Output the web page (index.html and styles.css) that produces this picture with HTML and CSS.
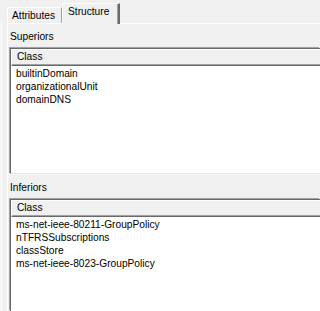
FILE: index.html
```html
<!DOCTYPE html>
<html>
<head>
<meta charset="utf-8">
<link rel="stylesheet" href="styles.css">
</head>
<body>
<div class="frame">
  <div class="edge"></div>
  <div class="tabctl">
    <div class="tabs">
      <div class="tab">Attributes</div>
      <div class="tab active">Structure</div>
    </div>
    <div class="page">
      <div class="label first">Superiors</div>
      <div class="list sup">
        <div class="header"><span class="col">Class</span></div>
        <div class="rows">
          <div class="row">builtinDomain</div>
          <div class="row">organizationalUnit</div>
          <div class="row">domainDNS</div>
        </div>
      </div>
      <div class="label">Inferiors</div>
      <div class="list inf">
        <div class="header"><span class="col">Class</span></div>
        <div class="rows">
          <div class="row">ms-net-ieee-80211-GroupPolicy</div>
          <div class="row">nTFRSSubscriptions</div>
          <div class="row">classStore</div>
          <div class="row">ms-net-ieee-8023-GroupPolicy</div>
        </div>
      </div>
    </div>
  </div>
</div>
</body>
</html>
```
FILE: styles.css
```css
html, body {
  margin: 0;
  padding: 0;
  background: #f0f0f0;
  font-family: "Liberation Sans", Arial, sans-serif;
  font-size: 10.2px;
  color: #000;
  overflow: hidden;
  height: 311px;
}
.frame {
  display: flex;
  height: 311px;
  overflow: hidden;
}
.edge {
  width: 1px;
  margin-left: 1px;
  margin-top: 21px;
  background: #ffffff;
  flex: none;
}
.tabctl {
  margin-left: 5px;
  flex: 1;
  min-width: 0;
  display: flex;
  flex-direction: column;
}
.tabs {
  display: flex;
  align-items: flex-end;
  height: 23px;
  padding-top: 3px;
  box-sizing: border-box;
  position: relative;
  z-index: 1;
  flex: none;
}
.tab {
  box-sizing: border-box;
  height: 16px;
  width: 55px;
  border-left: 1px solid #ffffff;
  border-top: 1px solid #ffffff;
  border-right: 1px solid #a0a0a0;
  border-top-left-radius: 2px;
  padding-left: 4px;
  line-height: 15px;
  background: #f0f0f0;
}
.tab.active {
  height: 21px;
  width: 58px;
  margin-bottom: -1px;
  padding-left: 5px;
  line-height: 16px;
  border-right: 2px solid #696969;
  box-shadow: inset -1px 0 0 #a0a0a0;
  border-top-right-radius: 1px;
}
.page {
  flex: 1;
  min-height: 0;
  display: flex;
  flex-direction: column;
  border-top: 1px solid #ffffff;
  border-left: 1px solid #ffffff;
  padding-left: 1px;
}
.label {
  padding-left: 1px;
  line-height: 13px;
  height: 13px;
  margin-top: 6px;
  margin-bottom: 4px;
  flex: none;
}
.label.first {
  margin-top: 6px;
  margin-bottom: 4px;
}
.list {
  background: #ffffff;
  border-top: 1px solid #696969;
  border-left: 1px solid #696969;
  box-shadow: -1px -1px 0 #a0a0a0;
  margin-left: 1px;
  margin-top: 1px;
  overflow: hidden;
}
.list.sup {
  height: 124px;
  flex: none;
  border-bottom: 1px solid #e3e3e3;
  box-shadow: -1px -1px 0 #a0a0a0, 0 1px 0 #ffffff;
  margin-bottom: 1px;
}
.list.inf {
  flex: 1;
  min-height: 0;
}
.header {
  box-sizing: border-box;
  height: 17px;
  background: #f0f0f0;
  border-top: 1px solid #ffffff;
  border-left: 1px solid #ffffff;
  border-bottom: 1px solid #696969;
  box-shadow: inset 0 -1px 0 #a0a0a0;
  padding-left: 5px;
  line-height: 14px;
}
.rows {
  padding-top: 1px;
  padding-left: 5px;
}
.row {
  height: 13px;
  line-height: 13px;
  white-space: nowrap;
}
```
